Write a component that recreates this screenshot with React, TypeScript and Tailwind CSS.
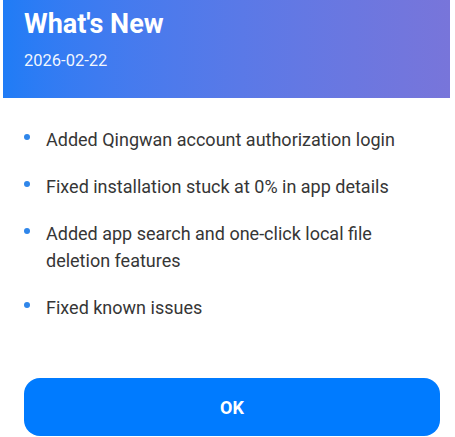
export default function App() {
  const items = [
    'Added Qingwan account authorization login',
    'Fixed installation stuck at 0% in app details',
    'Added app search and one-click local file deletion features',
    'Fixed known issues',
  ]

  return (
    <div className="w-[455px] h-[437px] overflow-hidden bg-white font-['Roboto',sans-serif]">
      <div className="ml-[3px] w-[447px] h-[98px] bg-gradient-to-r from-[#1f7cf6] to-[#7875da] px-[21px] pt-[6px]">
        <h1 className="text-[27px] leading-[36px] font-bold text-white">What's New</h1>
        <p className="mt-[8px] text-[16.5px] leading-[22px] text-white/95">2026-02-22</p>
      </div>

      <ul className="pl-[24px] pr-[40px] pt-[28px] flex flex-col gap-[20px]">
        {items.map((text) => (
          <li key={text} className="flex items-start text-[18px] leading-[27px] text-[#363636]">
            <span className="mt-[8px] mr-[16px] w-[6px] h-[6px] rounded-full bg-[#2f86ea] shrink-0" />
            <span>{text}</span>
          </li>
        ))}
      </ul>

      <div className="pl-[24px] pr-[15px] mt-[57px]">
        <button className="w-full h-[58px] rounded-[16px] bg-[#007bff] text-white text-[18px] font-bold">
          OK
        </button>
      </div>
    </div>
  )
}
